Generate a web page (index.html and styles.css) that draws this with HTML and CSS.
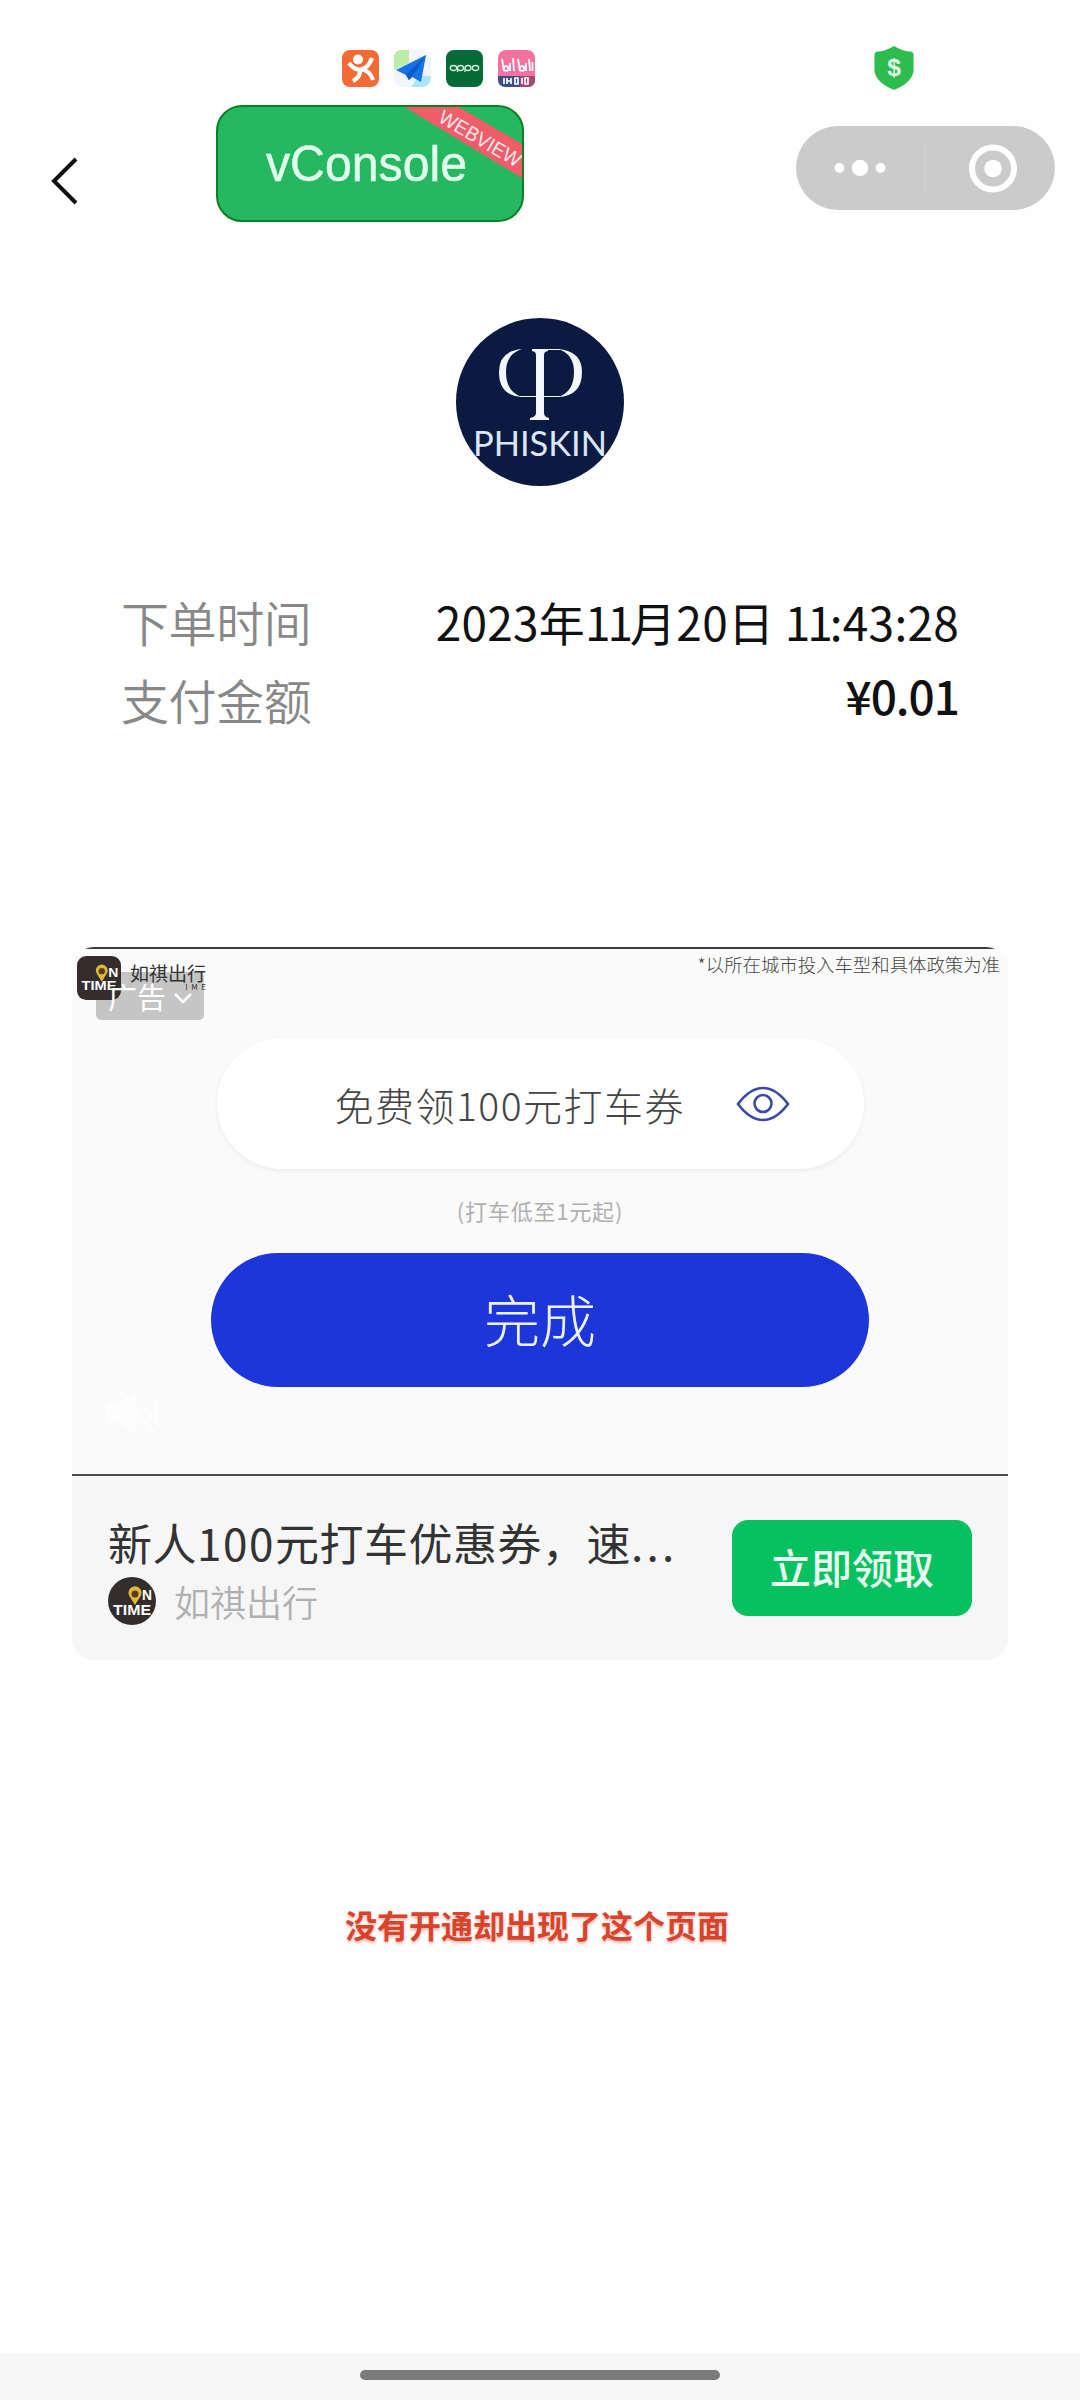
FILE: index.html
```html
<!DOCTYPE html>
<html lang="zh-CN">
<head>
<meta charset="utf-8">
<title>支付结果</title>
<link rel="stylesheet" href="styles.css">
</head>
<body>
<div class="status-bar">
  <div class="status-apps">
    <svg width="37" height="37" viewBox="0 0 37 37"><rect width="37" height="37" rx="8" fill="#f26a36"/><circle cx="16" cy="9.500" r="5" fill="#fff"/><path d="M7 13Q12 20 18 19.500Q26 19 30 8M18 19Q19 27 11 31M18 19Q28 20 31 30" fill="none" stroke="#fff" stroke-width="4.200"/></svg>
    <svg width="37" height="37" viewBox="0 0 37 37"><rect width="37" height="37" rx="8" fill="#f0f6fb"/><path d="M8 0H15V13L0 20V8Q0 0 8 0Z" fill="#bdeba8"/><path d="M25 26H37Q36 37 28 37H17Z" fill="#a9e5fb"/><path d="M32 5L2 20L12 25L15 30L18 27L27 32Z" fill="#1673e6"/><path d="M32 5L12 25L15 30L18 27Z" fill="#0d57c4"/></svg>
    <svg width="37" height="37" viewBox="0 0 37 37"><rect width="37" height="37" rx="8" fill="#046a38"/><g fill="none" stroke="#d7eadc" stroke-width="1.300"><ellipse cx="7.500" cy="18" rx="3.200" ry="2.500"/><ellipse cx="14.500" cy="18" rx="3" ry="2.500"/><path d="M11.500 18V22M19 18V22"/><ellipse cx="22" cy="18" rx="3" ry="2.500"/><ellipse cx="29.500" cy="18" rx="3.200" ry="2.500"/></g></svg>
    <svg width="37" height="37" viewBox="0 0 37 37"><rect width="37" height="37" rx="8" fill="#f472a0"/><path d="M0 26H37V29Q37 37 29 37H8Q0 37 0 29Z" fill="#3c4c8c"/><path d="M22 26H37V29Q37 37 29 37H22Z" fill="#a8476f"/><g fill="none" stroke="#fff" stroke-width="1.800"><path d="M4 9L6 21M12 13V21M15 8L16 21M20 9L22 21M28 13V21M31 9L32 21M34.500 12V21"/><circle cx="8" cy="18.500" r="2.400"/><circle cx="24" cy="18.500" r="2.400"/></g><path d="M6 28V34M9 28V34M9 31H13M13 28V34M17 28H20V34H17ZM24 28V34M27 28H30V34H27Z" fill="none" stroke="#fff" stroke-width="1.700"/></svg>
  </div>
  <svg class="shield" width="40" height="44" viewBox="0 0 40 45"><path d="M20 0Q28 5 38 6Q40 7 40 9V25Q39 37 20 45Q1 37 0 25V9Q0 7 2 6Q12 5 20 0Z" fill="#2dbd4e"/><text x="20" y="31" text-anchor="middle" class="shield-mark">$</text></svg>
</div>
<header class="nav">
  <svg class="back" width="28" height="48" viewBox="0 0 28 48"><path d="M25 2L3 24L25 46" fill="none" stroke="#111" stroke-width="4"/></svg>
  <div class="vconsole">
    <svg width="304" height="113" viewBox="0 0 304 113"><text x="48" y="74" textLength="201" lengthAdjust="spacingAndGlyphs" class="vconsole-text">vConsole</text><path d="M185 -1H239L304 37V71Z" fill="#f05c68"/><text x="0" y="0" transform="translate(219 14) rotate(30.500)" textLength="92" lengthAdjust="spacingAndGlyphs" class="ribbon-text">WEBVIEW</text></svg>
  </div>
  <div class="capsule">
    <svg width="259" height="84" viewBox="0 0 259 84"><g fill="#fff"><circle cx="43.500" cy="42" r="5"/><circle cx="64" cy="42" r="8.200"/><circle cx="84.500" cy="42" r="5"/><circle cx="197" cy="42.500" r="8.800"/></g><path d="M129.500 18V66" stroke="#d0d0d0" stroke-width="1.500"/><circle cx="197" cy="42.500" r="21" fill="none" stroke="#fff" stroke-width="6"/></svg>
  </div>
</header>
<main>
  <svg class="brand" width="168" height="168" viewBox="0 0 168 168"><circle cx="84" cy="84" r="84" fill="#0b1a40"/><g fill="#f1f6ff"><path d="M76 31H92V33Q88 33.500 88 37V95Q88 99 93 100V102H74V100Q80 99 80 95V37Q80 33.500 76 33Z"/><path d="M66 31Q43 33 43 54Q43 78 66 79Q50 74 50 54Q50 36 66 31Z"/><path d="M102 31Q126 33 126 54Q126 78 102 79Q118 74 118 54Q118 36 102 31Z"/><path d="M88 31H104V32H88ZM64 78H104V79H64Z"/></g><text x="17" y="138" textLength="134" lengthAdjust="spacingAndGlyphs" class="brand-text">PHISKIN</text></svg>
  <dl class="order">
    <div class="order-row"><dt>下单时间</dt><dd>2023年<span class="ones">11</span>月20日 <span class="ones">11</span>:43:28</dd></div>
    <div class="order-row"><dt>支付金额</dt><dd class="amount">¥0.01</dd></div>
  </dl>
  <section class="ad">
    <div class="ad-media">
      <div class="ad-top">
        <div class="ad-tag"></div>
        <svg class="ad-logo" width="44" height="44" viewBox="0 0 48 48"><rect width="48" height="48" rx="10" fill="#332e2d"/><g class="logo-text"><text x="34" y="23" textLength="11" lengthAdjust="spacingAndGlyphs">N</text><text x="5" y="37" textLength="38" lengthAdjust="spacingAndGlyphs">TIME</text></g><path d="M27 28L22 20A6.500 6.500 0 1 1 32 20Z" fill="#e0b83a"/><circle cx="27" cy="16.500" r="3.500" fill="#5b3b18"/></svg>
        <span class="ad-brand">如祺出行<small>I&nbsp; M&nbsp; E</small></span>
        <div class="ad-tag-label">广告<svg width="20" height="12" viewBox="0 0 20 12"><path d="M2 2L10 10L18 2" fill="none" stroke="#fff" stroke-width="2.500"/></svg></div>
        <span class="ad-note">*以所在城市投入车型和具体政策为准</span>
      </div>
      <div class="coupon"><span>免费领100元打车券</span><svg width="54" height="36" viewBox="0 0 54 36"><path d="M2 18Q14 2 27 2Q40 2 52 18Q40 34 27 34Q14 34 2 18Z" fill="none" stroke="#3b4aa8" stroke-width="2.600"/><circle cx="27" cy="17.500" r="8.500" fill="none" stroke="#3b4aa8" stroke-width="2.600"/></svg></div>
      <p class="coupon-hint">(打车低至1元起)</p>
      <div class="done">完成</div>
      <svg class="mute" width="56" height="46" viewBox="0 0 56 46"><path d="M2 15H15L29 3V43L15 31H2ZM36 14L52 34M51 10V36M14 2L50 44" fill="#fff" stroke="#fff" stroke-width="3"/></svg>
    </div>
    <div class="ad-info">
      <div class="ad-copy">
        <div class="ad-title">新人<span class="num">100</span>元打车优惠券，速<span class="dots">...</span></div>
        <div class="ad-source"><svg width="48" height="48" viewBox="0 0 48 48"><circle cx="24" cy="24" r="24" fill="#332e2d"/><g class="logo-text"><text x="34" y="23" textLength="10" lengthAdjust="spacingAndGlyphs">N</text><text x="5" y="38" textLength="38" lengthAdjust="spacingAndGlyphs">TIME</text></g><path d="M27 28L22 20A6.500 6.500 0 1 1 32 20Z" fill="#e0b83a"/><circle cx="27" cy="17" r="3.500" fill="#5b3b18"/></svg><span>如祺出行</span></div>
      </div>
      <div class="claim">立即领取</div>
    </div>
  </section>
  <p class="remark">没有开通却出现了这个页面</p>
</main>
<footer class="home-bar"><div class="handle"></div></footer>
</body>
</html>
```
FILE: styles.css
```css
* { box-sizing: border-box; }
body {
  margin: 0;
  width: 1080px;
  height: 2400px;
  display: flex;
  flex-direction: column;
  background: #fefefe;
  font-family: "Noto Sans CJK SC", sans-serif;
  white-space: nowrap;
}
svg { display: block; flex: none; }
p, dl, dd { margin: 0; }
.status-bar { height: 105px; display: flex; align-items: flex-start; padding-left: 342px; flex: none; }
.status-apps { display: flex; gap: 15px; padding-top: 50px; }
.shield { margin: 46px 0 0 339px; }
.shield-mark { font: 700 25px "Liberation Sans", sans-serif; fill: #e5ffe9; }
.nav { height: 213px; display: flex; align-items: flex-start; padding-left: 51px; flex: none; }
.back { margin-top: 52px; }
.vconsole {
  width: 308px;
  height: 117px;
  margin-left: 137px;
  border: 2px solid #0c8022;
  border-radius: 26px;
  overflow: hidden;
  background: #26b860;
}
.vconsole-text { font: 50px "Liberation Sans", sans-serif; fill: #e2ffee; stroke: #e2ffee; stroke-width: .5; }
.ribbon-text { font: 20px "Liberation Sans", sans-serif; fill: #ffe9ec; }
.capsule { width: 259px; height: 84px; margin: 21px 0 0 272px; border-radius: 42px; background: #cbcbcb; }
main { flex: 1; }
.brand { margin: 0 auto; }
.brand-text { font: 34px Lato, sans-serif; fill: #dce6f7; }
.order { margin-top: 99px; padding: 0 121px; font-size: 48px; }
.order-row { display: flex; justify-content: space-between; height: 78px; line-height: 72px; }
.order dt { color: #888; font-weight: 350; letter-spacing: -.4px; }
.order dd { color: #111; font-size: 46px; letter-spacing: .25px; }
.order .amount { font-weight: 500; line-height: 64px; letter-spacing: -1px; }
.order .ones { letter-spacing: -3px; }
.ad { width: 936px; height: 713px; margin: 206px auto 0; border-radius: 22px; overflow: hidden; background: #f6f6f6; }
.ad-media { height: 529px; border-top: 2px solid #3b3b3b; border-bottom: 2px solid #4a4a4a; background: #fafafa; }
.ad-top { position: relative; display: flex; height: 89px; padding: 7px 8px 0 5px; }
.ad-tag, .ad-tag-label { position: absolute; left: 24px; top: 23px; width: 108px; height: 48px; }
.ad-tag { border-radius: 5px; background: #c5c5c5; }
.ad-tag-label {
  padding-left: 12px;
  display: flex;
  align-items: center;
  gap: 7px;
  color: #fff;
  font-size: 29px;
  line-height: 48px;
}
.ad-tag-label svg { margin-top: 3px; }
.ad-logo { position: relative; }
.ad-brand { position: relative; margin-left: 9px; font-size: 19px; line-height: 34px; color: #333; }
.ad-brand small { position: absolute; right: 0; top: 19px; font-size: 8px; line-height: 24px; }
.ad-note { margin-left: auto; font-size: 18.400px; line-height: 16px; font-weight: 300; color: #444; }
.logo-text { font: 700 14px "Liberation Sans", sans-serif; fill: #fff; }
.coupon {
  width: 647px;
  height: 131px;
  margin: 0 auto;
  padding-left: 118px;
  display: flex;
  align-items: center;
  gap: 51px;
  border-radius: 66px;
  background: #fff;
  box-shadow: 0 2px 5px rgba(0, 0, 0, .06);
  color: #444;
  font-size: 39px;
  line-height: 58px;
  font-weight: 300;
  letter-spacing: 1.5px;
}
.coupon-hint { margin-top: 24px; height: 60px; text-align: center; font-size: 22px; line-height: 34px; letter-spacing: .8px; color: #b0b0b0; }
.done {
  width: 658px;
  height: 134px;
  margin: 0 auto;
  border-radius: 67px;
  background: #1c36da;
  color: #edf2ff;
  text-align: center;
  font-size: 56px;
  line-height: 130px;
  font-weight: 300;
}
.mute { margin: 3px 0 0 34px; opacity: .6; }
.ad-info { height: 184px; display: flex; justify-content: space-between; padding: 44px 36px 0; }
.ad-title { color: #333; font-size: 44px; line-height: 44px; height: 57px; letter-spacing: .5px; }
.ad-title .num { letter-spacing: 1.6px; }
.ad-title .dots { letter-spacing: 3.2px; }
.ad-source { display: flex; align-items: center; gap: 18px; color: #b0b0b0; font-size: 36px; line-height: 48px; font-weight: 350; }
.claim {
  width: 240px;
  height: 96px;
  border-radius: 16px;
  background: #07c160;
  color: #eafff2;
  text-align: center;
  font-size: 41px;
  line-height: 92px;
  font-weight: 500;
}
.remark { margin-top: 242px; text-align: center; padding-right: 6px; font-size: 32px; line-height: 44px; font-weight: 700; color: #d9432b; text-shadow: 0 2px 3px rgba(217, 67, 43, .4); }
.home-bar { height: 47px; padding-top: 17px; background: #f7f7f7; flex: none; }
.handle { width: 360px; height: 10px; margin: 0 auto; border-radius: 5px; background: #7b7b7b; }
```
